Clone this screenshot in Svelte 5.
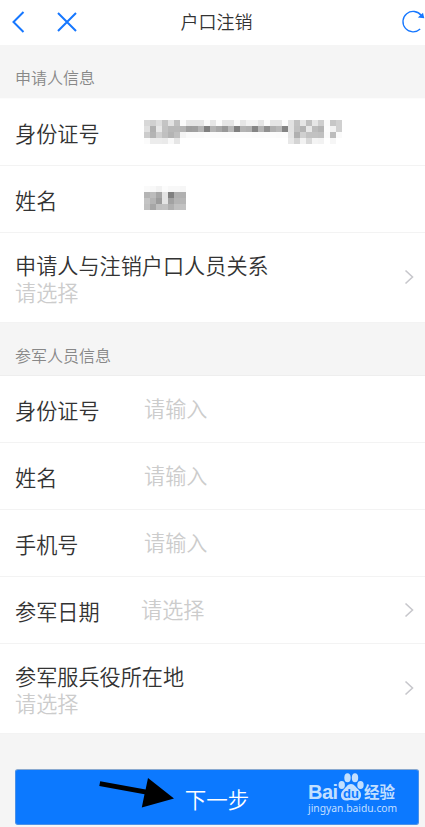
<script lang="ts">
	type Field = {
		label: string;
		placeholder?: string;
		mask?: string[];
		arrow?: boolean;
		stacked?: boolean;
	};

	// each pair of hex digits is the grey level of one 6px mosaic cell
	const idMask: string[] = [
		'd8 d0 de c4 e2 c0 fa e6 e6 e6 fa e6 fb e6 e6 fb e6 f2 f2 e6 fc e6 e6 fc e2 c2 e6 c0 e6 ce fa c6 d0',
		'e0 b0 e8 c2 b8 b8 b4 9e a0 b4 80 b4 a8 98 b8 80 b4 b0 84 b4 90 b0 b8 84 e2 c0 b4 e8 bc b4 fc f2 d0',
		'cc b4 d0 c0 b4 c0 f4 fa fa fa fc fb fb fb fb fc fc fc fb fb fc fc fb fc e4 b0 d0 c2 c2 c0 fa bc fa',
		'fb ec ec ea f8 e6 ff ff ff ff ff ff ff ff ff ff ff ff ff ff ff ff ff ff e8 d4 f2 d8 f4 f2 ff f6 ff'
	];
	const nameMask: string[] = [
		'fa f8 f2 fc f8 f8 f6',
		'b4 bc a6 e4 80 b0 b0',
		'c4 b4 9c e4 a2 b4 b6',
		'c0 a6 c0 c2 b0 c0 c2'
	];

	const sections: { title: string; fields: Field[] }[] = [
		{
			title: '申请人信息',
			fields: [
				{ label: '身份证号', mask: idMask },
				{ label: '姓名', mask: nameMask },
				{
					label: '申请人与注销户口人员关系',
					placeholder: '请选择',
					arrow: true,
					stacked: true
				}
			]
		},
		{
			title: '参军人员信息',
			fields: [
				{ label: '身份证号', placeholder: '请输入' },
				{ label: '姓名', placeholder: '请输入' },
				{ label: '手机号', placeholder: '请输入' },
				{ label: '参军日期', placeholder: '请选择', arrow: true },
				{ label: '参军服兵役所在地', placeholder: '请选择', arrow: true, stacked: true }
			]
		}
	];
</script>

<div class="page">
	<header class="navbar">
		<div class="nav-left">
			<svg width="14" height="24" viewBox="0 0 14 24">
				<path d="M12.500 2 2.500 12l10 10" />
			</svg>
			<svg width="20" height="24" viewBox="0 0 20 24">
				<path d="m1 3 18 18M19 3 1 21" />
			</svg>
		</div>
		<h1>户口注销</h1>
		<svg class="refresh" width="24" height="24" viewBox="0 0 24 24">
			<path d="M20.300 5.500A10.200 10.200 0 1 0 19.200 19" />
			<path class="tip" d="m22 2.700 1.300 5.500-6.500-.7Z" />
		</svg>
	</header>

	{#each sections as { title, fields }}
		<section>
			<h2>{title}</h2>
			{#each fields as { label, placeholder, mask, arrow, stacked }}
				<div class="field" class:stacked>
					<span class="label">{label}</span>
					{#if mask}
						<svg
							class="mask"
							width={mask[0].split(' ').length * 6}
							height="24"
							shape-rendering="crispEdges"
						>
							{#each mask as row, y}
								{#each row.split(' ') as grey, x}
									<rect x={x * 6} y={y * 6} width="6" height="6" fill="#{grey}{grey}{grey}" />
								{/each}
							{/each}
						</svg>
					{:else}
						<span class="placeholder" class:select={arrow}>{placeholder}</span>
					{/if}
					{#if arrow}
						<svg class="arrow" width="10" height="16" viewBox="0 0 10 16">
							<path d="m1.500 1.500 7 6.500-7 6.500" />
						</svg>
					{/if}
				</div>
			{/each}
		</section>
	{/each}

	<footer>
		<button>下一步</button>
		<svg class="pointer" width="78" height="32" viewBox="0 0 78 32">
			<path d="m1.200 3.200 45.400 8.200L49 0l26 20.600-32.200 8.800 2.700-13.200L.3 8Z" />
		</svg>
		<div class="watermark">
			<div class="brand">
				<span class="bai">Bai</span>
				<svg class="paw" width="26" height="28" viewBox="0 0 26 28">
					<ellipse cx="3.700" cy="12" rx="3.200" ry="4" />
					<ellipse cx="9.500" cy="4.800" rx="3.200" ry="4.500" />
					<ellipse cx="17" cy="4.800" rx="3.200" ry="4.500" />
					<ellipse cx="22.500" cy="12" rx="3.200" ry="4" />
					<path
						d="M13 11c3.600 0 4.600 3.200 7.400 5.500 5 4.500 2.400 11-2.600 11-2 0-3-.6-4.800-.6s-2.800.6-4.800.6c-5.200 0-7.400-6.500-2.500-11C8.500 14 9.600 11 13 11Z"
					/>
					<text x="13" y="24.500">du</text>
				</svg>
				<span class="cn">经验</span>
			</div>
			<div class="url">jingyan.baidu.com</div>
		</div>
	</footer>
</div>

<style>
	:global(body) {
		background: #f5f5f5;
	}

	.page {
		height: 827px;
		overflow: hidden;
		background: #f5f5f5;
		color: #333;
		font-family: 'Noto Sans CJK SC', sans-serif;
		font-weight: 350;
	}

	svg {
		display: block;
		flex: none;
		fill: none;
	}

	.navbar {
		display: grid;
		grid-template-columns: 1fr auto 1fr;
		align-items: center;
		height: 45px;
		padding-left: 11px;
		box-sizing: border-box;
		background: #fff;
		stroke: #1677ff;
		stroke-width: 2;
	}
	.nav-left {
		display: flex;
		gap: 32px;
		margin-top: -2px;
	}
	h1 {
		margin: -2px 0 0 -3px;
		font-size: 18px;
		font-weight: inherit;
		line-height: 43px;
		stroke: none;
	}
	.refresh {
		justify-self: end;
		margin: -2px 0 0;
		stroke-width: 1.3;
	}
	.tip {
		fill: #1677ff;
		stroke: none;
	}

	h2 {
		height: 54px;
		margin: 0;
		padding: 20px 15px 0;
		box-sizing: border-box;
		border-bottom: 1px solid #fcfcfc;
		color: #888;
		font-size: 16px;
		font-weight: inherit;
		line-height: 24px;
	}
	section + section h2 {
		height: 53px;
		border-color: #eee;
	}

	.field {
		display: flex;
		align-items: center;
		height: 67px;
		padding: 0 11px 0 15px;
		box-sizing: border-box;
		border-bottom: 1px solid #f3f3f3;
		background: #fff;
		font-size: 21.15px;
		line-height: 27px;
	}
	.label {
		width: 130px;
		padding-top: 1px;
	}
	.placeholder {
		margin: -3px 0 0 -1px;
		color: #ccc;
	}
	.placeholder.select {
		margin-left: -4px;
	}
	.mask {
		margin: -1px 0 0 -1px;
	}
	.field + .field .mask {
		margin-top: -3px;
	}
	.arrow {
		margin-left: auto;
		stroke: #c7c7cc;
		stroke-width: 1.6;
	}

	.stacked {
		display: grid;
		grid-template-columns: 1fr auto;
		align-content: center;
		height: 90px;
		padding-top: 1px;
	}
	.stacked .label {
		width: auto;
		padding: 0;
	}
	.stacked .placeholder {
		grid-row: 2;
		margin: 0;
	}
	.stacked .arrow {
		grid-area: 1 / 2 / 3 / 3;
		margin-top: -3px;
	}

	footer {
		position: relative;
		padding: 35px 6px 0 15px;
	}
	button {
		display: block;
		width: 100%;
		height: 56px;
		padding: 3px 0 0;
		border: 1px solid #4a91e8;
		border-top-color: #8aa9cf;
		border-radius: 3px;
		background: #0c79ff;
		color: #fff;
		font: inherit;
		font-size: 21.5px;
	}
	.pointer {
		position: absolute;
		top: 44px;
		left: 99px;
		fill: #000;
	}
	.watermark {
		position: absolute;
		top: 39px;
		left: 308px;
		color: #c2dfff;
	}
	.brand {
		display: flex;
		align-items: flex-end;
		height: 28px;
	}
	.bai {
		width: 30px;
		font: bold 20px/18px 'Liberation Sans', sans-serif;
		letter-spacing: -0.5px;
	}
	.paw {
		fill: #c2dfff;
	}
	.paw text {
		fill: #0c79ff;
		font: bold 13px 'Liberation Sans', sans-serif;
		text-anchor: middle;
	}
	.cn {
		font-size: 15.5px;
		font-weight: 700;
		line-height: 20px;
	}
	.url {
		font: 10.3px/14px 'Noto Sans', sans-serif;
	}
</style>
